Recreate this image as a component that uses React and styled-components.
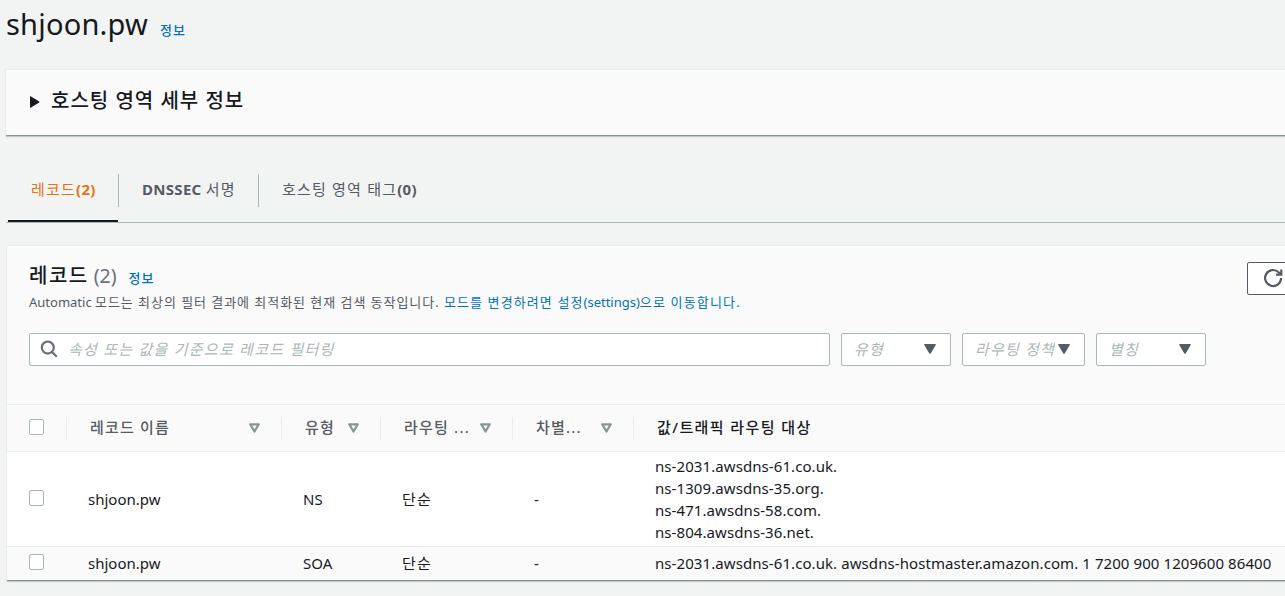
import React from 'react';
import styled, { createGlobalStyle } from 'styled-components';

const GlobalStyle = createGlobalStyle`
    * {
        box-sizing: border-box;
    }
    html {
        overflow: hidden;
    }
    body {
        margin: 0;
        overflow: hidden;
        background-color: #f2f3f3;
        color: #16191f;
        font-family: "Noto Sans", "Noto Sans CJK KR", sans-serif;
        font-size: 15px;
        line-height: 22px;
    }
`;

const Page = styled.main`
    height: 596px;
    padding-left: 6px;
    overflow: hidden;
`;

/* Hangul is set a little wider than the latin text around it */
const Ko = styled.span`
    letter-spacing: ${({ $track }) => $track || '0.08em'};
    font-weight: ${({ $weight }) => $weight || 'inherit'};
`;

const PageHeader = styled.header`
    display: flex;
    align-items: baseline;
    height: 69px;
    padding-top: 4px;
`;

const PageTitle = styled.h1`
    margin: 0;
    font-size: 29px;
    font-weight: 400;
    line-height: 40px;
    letter-spacing: 0.2px;
`;

const InfoLink = styled.a`
    margin-left: 12px;
    padding-bottom: 1px;
    font-size: 13px;
    font-weight: 500;
    color: #0073bb;
`;

const Card = styled.section`
    background-color: #fafafa;
    border-top: 1px solid #eaeded;
    border-bottom: 1px solid #879596;
    box-shadow: 0 1px 1px 0 rgba(0, 28, 36, 0.2);
`;

const DetailsCard = styled(Card)`
    display: flex;
    align-items: center;
    height: 67px;
    padding: 0 0 4px 23px;
`;

const CardTitle = styled.h2`
    margin: 0;
    font-size: 20px;
    font-weight: 500;
    line-height: 28px;
`;

const Expander = styled.svg`
    width: 11px;
    height: 12px;
    margin: 3px 11px 0 0;
    fill: #16191f;
`;

const Tabs = styled.nav`
    display: flex;
    height: 87px;
    padding: 38px 0 0 2px;
    border-bottom: 1px solid #aab7b8;
`;

const Tab = styled.div`
    width: ${({ $width }) => $width}px;
    padding-left: 23px;
    line-height: 30px;
    font-weight: 700;
    letter-spacing: 0.3px;
    color: ${({ $active }) => ($active ? '#ec7211' : '#545b64')};
    border-bottom: 2px solid ${({ $active }) => ($active ? '#16191f' : 'transparent')};
    white-space: nowrap;
`;

const TabDivider = styled.div`
    width: 1px;
    height: 33px;
    background-color: #aab7b8;
`;

const RecordsCard = styled(Card)`
    height: 336px;
    margin: 22px 0 0 1px;
`;

const RecordsHeader = styled.div`
    display: flex;
    justify-content: space-between;
    height: 87px;
    padding: 16px 0 0 22px;
`;

const TitleLine = styled.div`
    display: flex;
    align-items: baseline;
`;

const Counter = styled.span`
    margin-left: 5px;
    font-size: 19.5px;
    font-weight: 400;
    color: #687078;
`;

const Description = styled.p`
    margin: 1px 0 0;
    font-size: 13px;
    color: #545b64;
    white-space: nowrap;

    a {
        color: #0073bb;
    }
`;

const RefreshButton = styled.button`
    display: flex;
    align-items: center;
    flex: none;
    width: 50px;
    height: 33px;
    margin-right: -12px;
    padding: 0 0 2px 15px;
    background-color: #ffffff;
    border: 1px solid #545b64;
    border-radius: 2px;

    svg {
        width: 20px;
        height: 20px;
    }
`;

const Filters = styled.div`
    display: flex;
    gap: 11px;
    height: 71px;
    padding-left: 22px;
`;

const Field = styled.div`
    display: flex;
    align-items: center;
    width: ${({ $width }) => $width}px;
    height: 33px;
    padding: 0 14px 2px 12px;
    background-color: #ffffff;
    border: 1px solid #aab7b8;
    border-radius: 2px;
    color: #aab7b8;
    font-style: italic;
    white-space: nowrap;
`;

const SearchField = styled(Field)`
    padding-left: 10px;

    svg {
        width: 18px;
        height: 18px;
        margin: 1px 10px 0 0;
    }
`;

const SelectField = styled(Field)`
    justify-content: space-between;

    svg {
        flex: none;
        width: 12px;
        height: 10px;
        fill: #545b64;
    }
`;

const FieldText = styled(Ko)`
    overflow: hidden;
`;

const TableRow = styled.div`
    display: grid;
    grid-template-columns: 60px 215px 99px 132px 121px 1fr;
    align-items: center;
    height: ${({ $height }) => $height}px;
    padding-bottom: ${({ $lift }) => $lift || 0}px;
    background-color: ${({ $plain }) => ($plain ? '#ffffff' : '#fafafa')};
    border-top: 1px solid #eaeded;
`;

const HeadCell = styled.div`
    display: flex;
    align-items: center;
    justify-content: space-between;
    height: 23px;
    padding: 0 21px 2px ${({ $check }) => ($check ? 22 : 23)}px;
    border-right: 1px solid ${({ $last }) => ($last ? 'transparent' : '#eaeded')};
    color: ${({ $last }) => ($last ? '#16191f' : '#545b64')};
    font-weight: 500;
    white-space: nowrap;

    svg {
        width: 11px;
        height: 10px;
        margin-top: 2px;
    }
`;

const Cell = styled.div`
    padding-left: ${({ $check }) => ($check ? 22 : 21)}px;
    letter-spacing: ${({ $value }) => ($value ? '0.08px' : 'normal')};
    white-space: nowrap;
`;

const Checkbox = styled.span`
    display: block;
    width: 15px;
    height: 16px;
    margin-bottom: ${({ $lift }) => $lift || 0}px;
    background-color: #ffffff;
    border: 1px solid #aab7b8;
    border-radius: 2px;
`;

const columns = [
    { label: '레코드 이름', sortable: true },
    { label: '유형', sortable: true },
    { label: '라우팅 ...', sortable: true },
    { label: '차별...', sortable: true },
    { label: '값/트래픽 라우팅 대상' },
];

const records = [
    {
        name: 'shjoon.pw',
        type: 'NS',
        policy: '단순',
        values: [
            'ns-2031.awsdns-61.co.uk.',
            'ns-1309.awsdns-35.org.',
            'ns-471.awsdns-58.com.',
            'ns-804.awsdns-36.net.',
        ],
        height: 95,
        lift: 0,
    },
    {
        name: 'shjoon.pw',
        type: 'SOA',
        policy: '단순',
        values: ['ns-2031.awsdns-61.co.uk. awsdns-hostmaster.amazon.com. 1 7200 900 1209600 86400'],
        height: 34,
        lift: 1,
    },
];

const SearchIcon = () => (
    <svg viewBox="0 0 18 18" fill="none" stroke="#687078" strokeWidth="2.2">
        <circle cx="7.8" cy="7.6" r="6" />
        <path d="M12 12l4.8 4.8" />
    </svg>
);

const RefreshIcon = () => (
    <svg viewBox="0 0 20 20" fill="none" stroke="#545b64" strokeWidth="2.2">
        <path d="M18.1 10a8 8 0 1 1-2.5-5.8l2 1.8" />
        <path d="M18.3 1.4v5.2h-5.4" />
    </svg>
);

const CaretIcon = () => (
    <svg viewBox="0 0 12 10">
        <path d="M.8 0h10.4q1.1 0 .5 1L6.7 9.4q-.7.9-1.4 0L.3 1Q-.3 0 .8 0z" />
    </svg>
);

const SortIcon = () => (
    <svg viewBox="0 0 11 10" fill="none" stroke="#879596" strokeWidth="2.2" strokeLinejoin="round">
        <path d="M1.2 1.3h8.6L5.5 8.5z" />
    </svg>
);

const App = () => (
    <Page>
        <GlobalStyle />
        <PageHeader>
            <PageTitle>shjoon.pw</PageTitle>
            <InfoLink><Ko>정보</Ko></InfoLink>
        </PageHeader>

        <DetailsCard>
            <Expander viewBox="0 0 11 12">
                <path d="M1 .6v10.8q0 .6.6.3l8.6-5.2q.6-.5 0-1L1.6.3Q1 0 1 .6z" />
            </Expander>
            <CardTitle><Ko $track="1px">호스팅 영역 세부 정보</Ko></CardTitle>
        </DetailsCard>

        <Tabs>
            <Tab $active $width={110}><Ko $weight={400}>레코드</Ko>(2)</Tab>
            <TabDivider />
            <Tab $width={139}>DNSSEC <Ko $weight={400}>서명</Ko></Tab>
            <TabDivider />
            <Tab $width={180}><Ko $weight={400}>호스팅 영역 태그</Ko>(0)</Tab>
        </Tabs>

        <RecordsCard>
            <RecordsHeader>
                <div>
                    <TitleLine>
                        <CardTitle><Ko $track="1.5px">레코드</Ko></CardTitle>
                        <Counter>(2)</Counter>
                        <InfoLink><Ko>정보</Ko></InfoLink>
                    </TitleLine>
                    <Description>
                        Automatic <Ko $track="0.95px">모드는 최상의 필터 결과에 최적화된 현재 검색 동작입니다. </Ko>
                        <a>
                            <Ko $track="1.1px">모드를 변경하려면 설정</Ko>(settings)<Ko $track="1.15px">으로 이동합니다.</Ko>
                        </a>
                    </Description>
                </div>
                <RefreshButton><RefreshIcon /></RefreshButton>
            </RecordsHeader>

            <Filters>
                <SearchField $width={801}>
                    <SearchIcon />
                    <Ko $track="1.25px">속성 또는 값을 기준으로 레코드 필터링</Ko>
                </SearchField>
                <SelectField $width={110}><FieldText>유형</FieldText><CaretIcon /></SelectField>
                <SelectField $width={123}><FieldText>라우팅 정책</FieldText><CaretIcon /></SelectField>
                <SelectField $width={110}><FieldText>별칭</FieldText><CaretIcon /></SelectField>
            </Filters>

            <TableRow $height={47}>
                <HeadCell $check><Checkbox /></HeadCell>
                {columns.map(({ label, sortable }) => (
                    <HeadCell key={label} $last={!sortable}>
                        <Ko $track={sortable ? '1.2px' : '1.4px'}>{label}</Ko>
                        {sortable && <SortIcon />}
                    </HeadCell>
                ))}
            </TableRow>
            {records.map(({ name, type, policy, values, height, lift }, i) => (
                <TableRow key={type} $height={height} $lift={lift} $plain={i === 0}>
                    <Cell $check><Checkbox $lift={2} /></Cell>
                    <Cell>{name}</Cell>
                    <Cell>{type}</Cell>
                    <Cell><Ko>{policy}</Ko></Cell>
                    <Cell>-</Cell>
                    <Cell $value>
                        {values.map((value) => <div key={value}>{value}</div>)}
                    </Cell>
                </TableRow>
            ))}
        </RecordsCard>
    </Page>
);

export default App;
